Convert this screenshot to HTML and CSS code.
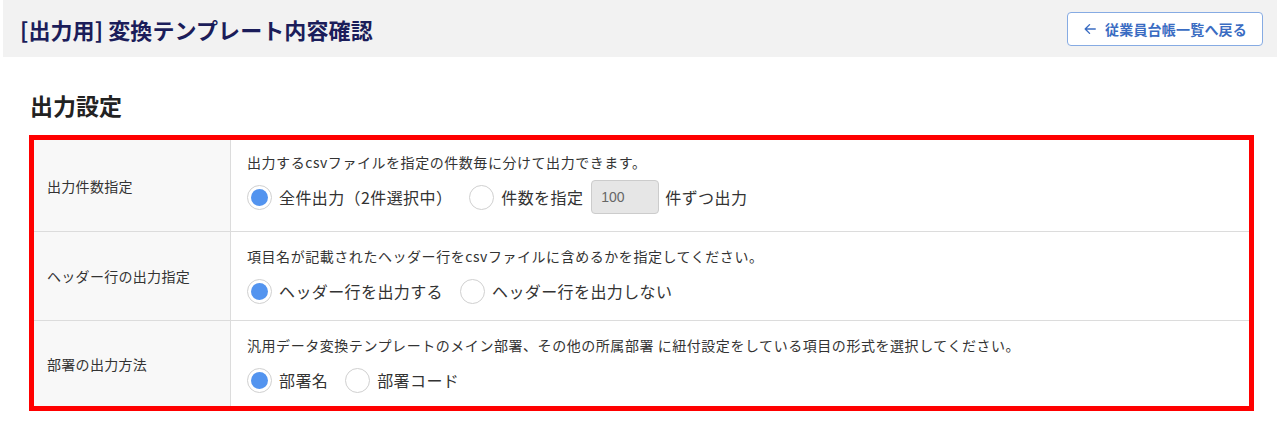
FILE: index.html
```html
<!DOCTYPE html>
<html lang="ja">
<head>
<meta charset="utf-8">
<title>変換テンプレート内容確認</title>
<link rel="stylesheet" href="styles.css">
</head>
<body>
<div class="page">
  <header class="topbar">
    <h1 class="title">[出力用] 変換テンプレート内容確認</h1>
    <button class="back-btn" type="button">
      <svg class="back-icon" viewBox="0 0 16 16" width="14" height="14" aria-hidden="true">
        <path d="M14 8H2.5M7.5 3L2.5 8l5 5" fill="none" stroke="currentColor" stroke-width="1.6" stroke-linecap="round" stroke-linejoin="round"/>
      </svg>
      <span>従業員台帳一覧へ戻る</span>
    </button>
  </header>

  <section class="section">
    <h2 class="section-title">出力設定</h2>
    <div class="highlight">
      <div class="settings">
        <div class="row row-count">
          <div class="label">出力件数指定</div>
          <div class="cell">
            <p class="desc">出力するcsvファイルを指定の件数毎に分けて出力できます。</p>
            <div class="options">
              <label class="radio"><span class="dot checked"></span><span>全件出力（2件選択中）</span></label>
              <label class="radio"><span class="dot"></span><span>件数を指定</span></label>
              <span class="num-input">100</span>
              <span class="suffix">件ずつ出力</span>
            </div>
          </div>
        </div>
        <div class="row row-header">
          <div class="label">ヘッダー行の出力指定</div>
          <div class="cell">
            <p class="desc">項目名が記載されたヘッダー行をcsvファイルに含めるかを指定してください。</p>
            <div class="options">
              <label class="radio"><span class="dot checked"></span><span>ヘッダー行を出力する</span></label>
              <label class="radio"><span class="dot"></span><span>ヘッダー行を出力しない</span></label>
            </div>
          </div>
        </div>
        <div class="row">
          <div class="label">部署の出力方法</div>
          <div class="cell">
            <p class="desc">汎用データ変換テンプレートのメイン部署、その他の所属部署 に紐付設定をしている項目の形式を選択してください。</p>
            <div class="options">
              <label class="radio"><span class="dot checked"></span><span>部署名</span></label>
              <label class="radio"><span class="dot"></span><span>部署コード</span></label>
            </div>
          </div>
        </div>
      </div>
    </div>
  </section>
</div>
</body>
</html>
```

FILE: styles.css
```css
* { box-sizing: border-box; }

html, body {
  margin: 0;
  padding: 0;
  background: #fff;
}

body {
  font-family: "Noto Sans CJK JP", "Noto Sans", "Liberation Sans", sans-serif;
  color: #333;
}

.page {
  padding: 0 3px;
}

.topbar {
  height: 57px;
  background: #f2f2f2;
  display: flex;
  align-items: center;
  justify-content: space-between;
  padding: 0 14px 0 17px;
}

.title {
  margin: 0;
  font-size: 22px;
  font-weight: 700;
  color: #1b1d5a;
  letter-spacing: 0.1px;
}

.back-btn {
  height: 34px;
  width: 196px;
  display: flex;
  align-items: center;
  justify-content: center;
  gap: 8px;
  background: #fff;
  border: 1px solid #86abe3;
  border-radius: 4px;
  color: #3a6cc2;
  font-family: inherit;
  font-size: 14px;
  font-weight: 700;
  letter-spacing: 0.2px;
  padding: 0 10px;
  margin-top: 1px;
}

.back-icon {
  flex: none;
}

.section {
  padding: 0 23px 0 26px;
}

.section-title {
  margin: 33px 0 15px 1px;
  font-size: 23px;
  font-weight: 700;
  color: #222;
  line-height: 30px;
}

.highlight {
  border: 5px solid #ff0000;
}

.settings {
  display: flex;
  flex-direction: column;
}

.row {
  display: grid;
  grid-template-columns: 197px 1fr;
  border-top: 1px solid #dcdcdc;
}

.row:first-child {
  border-top: none;
}

.label {
  background: #f8f8f8;
  border-right: 1px solid #dcdcdc;
  display: flex;
  align-items: center;
  padding: 0 13px;
  font-size: 14px;
  letter-spacing: 0.3px;
  color: #333;
}

.cell {
  padding: 13px 16px 9px;
  display: flex;
  flex-direction: column;
  gap: 7px;
}

.row-count .cell {
  padding-top: 11px;
  padding-bottom: 17px;
}

.row-header .cell {
  padding-bottom: 12px;
}

.desc {
  margin: 0;
  font-size: 14px;
  line-height: 22px;
  letter-spacing: 0.55px;
  color: #333;
}

.options {
  display: flex;
  align-items: center;
  min-height: 34px;
  font-size: 16px;
  letter-spacing: 0.4px;
  color: #333;
}

.radio {
  display: flex;
  align-items: center;
  gap: 7px;
  margin-right: 17px;
}

.radio + .num-input {
  margin-left: -9px;
}

.dot {
  width: 25px;
  height: 25px;
  border-radius: 50%;
  border: 1px solid #d0d0d0;
  background: #fff;
  position: relative;
  flex: none;
}

.dot.checked::after {
  content: "";
  position: absolute;
  inset: 3px;
  border-radius: 50%;
  background: #5394ef;
}

.num-input {
  width: 68px;
  height: 34px;
  background: #e6e6e6;
  border: 1px solid #cccccc;
  border-radius: 4px;
  display: flex;
  align-items: center;
  padding-left: 9px;
  font-family: "Liberation Sans", Arial, sans-serif;
  font-size: 14px;
  letter-spacing: 0;
  color: #666;
}

.suffix {
  margin-left: 6px;
}
```
